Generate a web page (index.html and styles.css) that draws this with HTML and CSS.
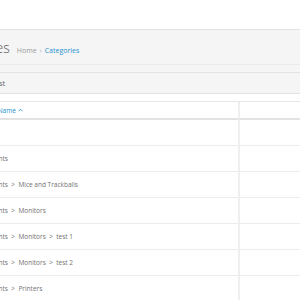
FILE: index.html
```html
<!DOCTYPE html>
<html lang="en">
<head>
  <meta charset="UTF-8" />
  <title>Categories</title>
  <link rel="stylesheet" href="styles.css">
</head>
<body>
  <div class="topbar"></div>
  <div class="page">
    <div class="page-header">
      <h1>Categories</h1>
      <ul class="breadcrumb">
        <li><a href="#" class="crumb">Home</a></li>
        <li><a href="#" class="crumb active">Categories</a></li>
      </ul>
    </div>

    <div class="content">
      <div class="panel">
        <div class="panel-heading">
          <h3>Category List</h3>
        </div>
        <div class="panel-body">
          <table>
            <thead>
              <tr>
                <th class="col-name"><a href="#" class="sort">Category Name
                  <svg class="caret" width="5" height="4" viewBox="0 0 5 4"><path d="M0.6 3.2 L2.5 1.2 L4.4 3.2" fill="none" stroke="#1e91cf" stroke-width="0.8"/></svg></a></th>
                <th class="col-sort">Sort Order</th>
                <th class="col-action">Action</th>
              </tr>
            </thead>
            <tbody>
              <tr><td>Cameras</td><td class="col-sort">0</td><td></td></tr>
              <tr><td>Components</td><td class="col-sort">0</td><td></td></tr>
              <tr><td>Components&nbsp;&nbsp;&gt;&nbsp;&nbsp;Mice and Trackballs</td><td class="col-sort">0</td><td></td></tr>
              <tr><td>Components&nbsp;&nbsp;&gt;&nbsp;&nbsp;Monitors</td><td class="col-sort">0</td><td></td></tr>
              <tr><td>Components&nbsp;&nbsp;&gt;&nbsp;&nbsp;Monitors&nbsp;&nbsp;&gt;&nbsp;&nbsp;test 1</td><td class="col-sort">0</td><td></td></tr>
              <tr><td>Components&nbsp;&nbsp;&gt;&nbsp;&nbsp;Monitors&nbsp;&nbsp;&gt;&nbsp;&nbsp;test 2</td><td class="col-sort">0</td><td></td></tr>
              <tr><td>Components&nbsp;&nbsp;&gt;&nbsp;&nbsp;Printers</td><td class="col-sort">0</td><td></td></tr>
              <tr><td>Components&nbsp;&nbsp;&gt;&nbsp;&nbsp;Scanners</td><td class="col-sort">0</td><td></td></tr>
            </tbody>
          </table>
        </div>
      </div>
    </div>
  </div>
</body>
</html>
```

FILE: styles.css
```css
html, body {
  margin: 0;
  padding: 0;
  overflow: hidden;
  background-color: #fff;
}

body {
  font-family: 'Open Sans', sans-serif;
  font-size: 6.5px;
  color: #727272;
}

a {
  text-decoration: none;
}

.topbar {
  height: 29px;
  background-color: #fff;
  border-bottom: 1px solid #e2e2e2;
}

.page {
  margin-left: -62px;
}

.page-header {
  height: 35px;
  box-sizing: border-box;
  padding: 11px 0 0 5px;
  background-color: #f5f5f5;
  border-bottom: 1px solid #eaeaea;
  display: flex;
  align-items: baseline;
  gap: 7px;
}

h1 {
  margin: 0;
  font-size: 14px;
  line-height: 1;
  font-weight: 300;
  color: #555;
}

.breadcrumb {
  list-style: none;
  margin: 0;
  padding: 0;
  display: flex;
  font-size: 7px;
}

.breadcrumb li + li:before {
  content: "\203A";
  padding: 0 3px;
  color: #aaa;
}

.crumb {
  color: #999;
}

.crumb.active {
  color: #1e91cf;
}

.content {
  background-color: #f5f5f5;
  padding-top: 7px;
}

.panel {
  border-top: 1px solid #e2e2e2;
  background-color: #fff;
}

.panel-heading {
  height: 21px;
  box-sizing: border-box;
  padding-left: 22px;
  background-color: #f5f5f5;
  border-bottom: 1px solid #e2e2e2;
  display: flex;
  align-items: center;
}

.panel-heading h3 {
  margin: 0;
  font-size: 7.5px;
  font-weight: normal;
  color: #666;
}

.panel-body {
  padding: 7px 0 0 27px;
}

table {
  table-layout: fixed;
  width: 480px;
  border-collapse: separate;
  border-spacing: 0;
  border-top: 1px solid #e6e6e6;
}

th, td {
  padding: 0 4px;
  text-align: left;
  font-weight: normal;
  white-space: nowrap;
}

th {
  height: 16px;
  border-bottom: 2px solid #e3e3e3;
}

td {
  height: 25px;
  border-bottom: 1px solid #ececec;
}

.col-name {
  width: 265px;
}

.col-sort {
  width: 112px;
  text-align: right;
  border-left: 2px solid #efefef;
}

.col-action {
  width: 80px;
}

.sort {
  color: #1e91cf;
  display: inline-flex;
  align-items: center;
  gap: 2px;
}
```
